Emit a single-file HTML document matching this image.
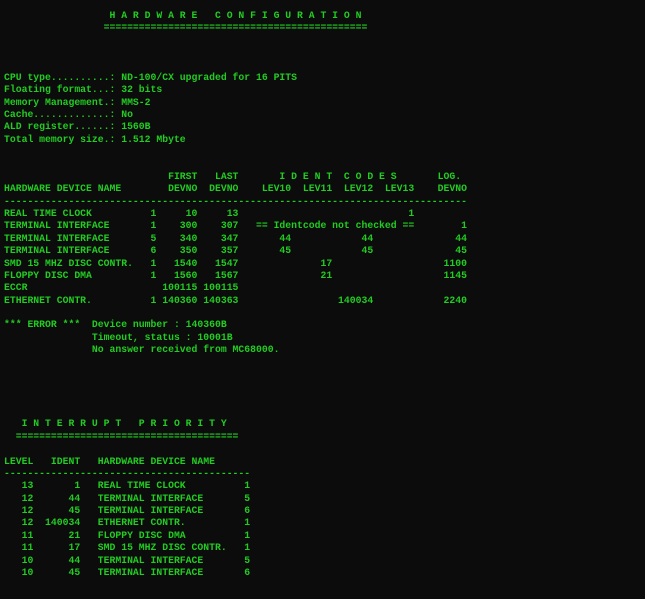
<!DOCTYPE html>
<html><head><meta charset="utf-8"><style>
html,body{margin:0;padding:0;background:#0c0c0c;width:645px;height:599px;overflow:hidden}
pre{margin:0;position:absolute;left:4px;top:10px;font-family:"Liberation Mono",monospace;font-size:9.77px;line-height:12.37px;color:#22cc22;font-weight:bold;white-space:pre}
</style></head><body><pre>                  H A R D W A R E   C O N F I G U R A T I O N
                 =============================================



CPU type..........: ND-100/CX upgraded for 16 PITS
Floating format...: 32 bits
Memory Management.: MMS-2
Cache.............: No
ALD register......: 1560B
Total memory size.: 1.512 Mbyte


                            FIRST   LAST       I D E N T  C O D E S       LOG.
HARDWARE DEVICE NAME        DEVNO  DEVNO    LEV10  LEV11  LEV12  LEV13    DEVNO
-------------------------------------------------------------------------------
REAL TIME CLOCK          1     10     13                             1
TERMINAL INTERFACE       1    300    307   == Identcode not checked ==        1
TERMINAL INTERFACE       5    340    347       44            44              44
TERMINAL INTERFACE       6    350    357       45            45              45
SMD 15 MHZ DISC CONTR.   1   1540   1547              17                   1100
FLOPPY DISC DMA          1   1560   1567              21                   1145
ECCR                       100115 100115
ETHERNET CONTR.          1 140360 140363                 140034            2240

*** ERROR ***  Device number : 140360B
               Timeout, status : 10001B
               No answer received from MC68000.





   I N T E R R U P T   P R I O R I T Y
  ======================================

LEVEL   IDENT   HARDWARE DEVICE NAME
------------------------------------------
   13       1   REAL TIME CLOCK          1
   12      44   TERMINAL INTERFACE       5
   12      45   TERMINAL INTERFACE       6
   12  140034   ETHERNET CONTR.          1
   11      21   FLOPPY DISC DMA          1
   11      17   SMD 15 MHZ DISC CONTR.   1
   10      44   TERMINAL INTERFACE       5
   10      45   TERMINAL INTERFACE       6</pre></body></html>
